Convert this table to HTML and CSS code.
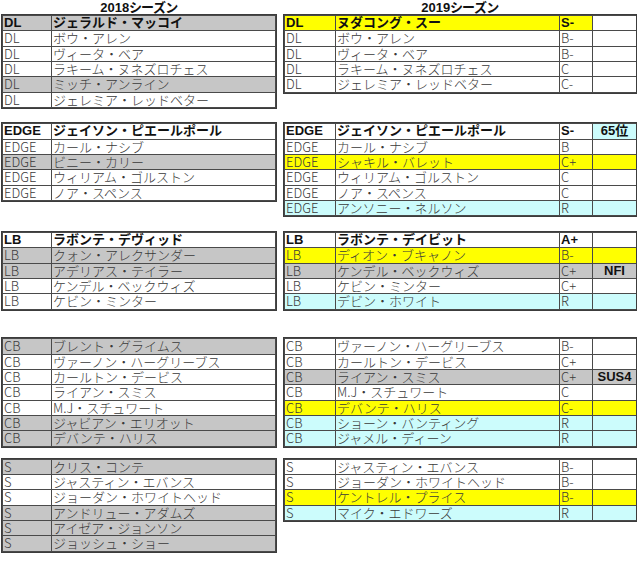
FILE: index.html
```html
<!DOCTYPE html>
<html lang="ja">
<head>
<meta charset="utf-8">
<link rel="stylesheet" href="styles.css">
</head>
<body>
<div class="sheet">
  <div class="title">2018シーズン</div>
  <div class="title">2019シーズン</div>

  <div class="tbl left">
    <div class="c h g">DL</div><div class="c h g">ジェラルド・マッコイ</div>
    <div class="c">DL</div><div class="c">ボウ・アレン</div>
    <div class="c">DL</div><div class="c">ヴィータ・ベア</div>
    <div class="c">DL</div><div class="c">ラキーム・ヌネズロチェス</div>
    <div class="c g">DL</div><div class="c g">ミッチ・アンライン</div>
    <div class="c">DL</div><div class="c">ジェレミア・レッドベター</div>
  </div>
  <div class="tbl right">
    <div class="c h y">DL</div><div class="c h y">ヌダコング・スー</div><div class="c h y">S-</div><div class="c"></div>
    <div class="c">DL</div><div class="c">ボウ・アレン</div><div class="c">B-</div><div class="c"></div>
    <div class="c">DL</div><div class="c">ヴィータ・ベア</div><div class="c">B-</div><div class="c"></div>
    <div class="c">DL</div><div class="c">ラキーム・ヌネズロチェス</div><div class="c">C</div><div class="c"></div>
    <div class="c">DL</div><div class="c">ジェレミア・レッドベター</div><div class="c">C-</div><div class="c"></div>
  </div>

  <div class="tbl left">
    <div class="c h">EDGE</div><div class="c h">ジェイソン・ピエールポール</div>
    <div class="c">EDGE</div><div class="c">カール・ナシブ</div>
    <div class="c g">EDGE</div><div class="c g">ビニー・カリー</div>
    <div class="c">EDGE</div><div class="c">ウィリアム・ゴルストン</div>
    <div class="c">EDGE</div><div class="c">ノア・スペンス</div>
  </div>
  <div class="tbl right">
    <div class="c h">EDGE</div><div class="c h">ジェイソン・ピエールポール</div><div class="c h">S-</div><div class="c h b ctr">65位</div>
    <div class="c">EDGE</div><div class="c">カール・ナシブ</div><div class="c">B</div><div class="c"></div>
    <div class="c y">EDGE</div><div class="c y">シャキル・バレット</div><div class="c y">C+</div><div class="c y"></div>
    <div class="c">EDGE</div><div class="c">ウィリアム・ゴルストン</div><div class="c">C</div><div class="c"></div>
    <div class="c">EDGE</div><div class="c">ノア・スペンス</div><div class="c">C</div><div class="c"></div>
    <div class="c b">EDGE</div><div class="c b">アンソニー・ネルソン</div><div class="c b">R</div><div class="c b"></div>
  </div>

  <div class="tbl left">
    <div class="c h">LB</div><div class="c h">ラボンテ・デヴィッド</div>
    <div class="c g">LB</div><div class="c g">クォン・アレクサンダー</div>
    <div class="c g">LB</div><div class="c g">アデリアス・テイラー</div>
    <div class="c">LB</div><div class="c">ケンデル・ベックウィズ</div>
    <div class="c">LB</div><div class="c">ケビン・ミンター</div>
  </div>
  <div class="tbl right">
    <div class="c h">LB</div><div class="c h">ラボンテ・デイビット</div><div class="c h">A+</div><div class="c"></div>
    <div class="c y">LB</div><div class="c y">ディオン・ブキャノン</div><div class="c y">B-</div><div class="c y"></div>
    <div class="c g">LB</div><div class="c g">ケンデル・ベックウィズ</div><div class="c g">C+</div><div class="c g h ctr">NFI</div>
    <div class="c">LB</div><div class="c">ケビン・ミンター</div><div class="c">C+</div><div class="c"></div>
    <div class="c b">LB</div><div class="c b">デビン・ホワイト</div><div class="c b">R</div><div class="c b"></div>
  </div>

  <div class="tbl left gap2">
    <div class="c g">CB</div><div class="c g">ブレント・グライムス</div>
    <div class="c">CB</div><div class="c">ヴァーノン・ハーグリーブス</div>
    <div class="c">CB</div><div class="c">カールトン・デービス</div>
    <div class="c">CB</div><div class="c">ライアン・スミス</div>
    <div class="c">CB</div><div class="c">M.J・スチュワート</div>
    <div class="c g">CB</div><div class="c g">ジャビアン・エリオット</div>
    <div class="c g">CB</div><div class="c g">デバンテ・ハリス</div>
  </div>
  <div class="tbl right gap2">
    <div class="c">CB</div><div class="c">ヴァーノン・ハーグリーブス</div><div class="c">B-</div><div class="c"></div>
    <div class="c">CB</div><div class="c">カールトン・デービス</div><div class="c">C+</div><div class="c"></div>
    <div class="c g">CB</div><div class="c g">ライアン・スミス</div><div class="c g">C+</div><div class="c g h ctr">SUS4</div>
    <div class="c">CB</div><div class="c">M.J・スチュワート</div><div class="c">C</div><div class="c"></div>
    <div class="c y">CB</div><div class="c y">デバンテ・ハリス</div><div class="c y">C-</div><div class="c y"></div>
    <div class="c b">CB</div><div class="c b">ショーン・バンティング</div><div class="c b">R</div><div class="c b"></div>
    <div class="c b">CB</div><div class="c b">ジャメル・ディーン</div><div class="c b">R</div><div class="c b"></div>
  </div>

  <div class="tbl left gap3">
    <div class="c g">S</div><div class="c g">クリス・コンテ</div>
    <div class="c">S</div><div class="c">ジャスティン・エバンス</div>
    <div class="c">S</div><div class="c">ジョーダン・ホワイトヘッド</div>
    <div class="c g">S</div><div class="c g">アンドリュー・アダムズ</div>
    <div class="c g">S</div><div class="c g">アイゼア・ジョンソン</div>
    <div class="c g">S</div><div class="c g">ジョッシュ・ショー</div>
  </div>
  <div class="tbl right gap3">
    <div class="c">S</div><div class="c">ジャスティン・エバンス</div><div class="c">B-</div><div class="c"></div>
    <div class="c">S</div><div class="c">ジョーダン・ホワイトヘッド</div><div class="c">B-</div><div class="c"></div>
    <div class="c y">S</div><div class="c y">ケントレル・プライス</div><div class="c y">B-</div><div class="c y"></div>
    <div class="c b">S</div><div class="c b">マイク・エドワーズ</div><div class="c b">R</div><div class="c b"></div>
  </div>
</div>
</body>
</html>
```

FILE: styles.css
```css
html, body {
  margin: 0;
  padding: 0;
  background: #ffffff;
}
body {
  width: 640px;
  height: 561px;
  overflow: hidden;
  font-family: "Noto Sans CJK JP", "Noto Sans", sans-serif;
}
.sheet {
  display: grid;
  grid-template-columns: 276px 354px;
  column-gap: 6px;
  padding-left: 1px;
  align-items: start;
}
.title {
  height: 14px;
  line-height: 15px;
  text-align: center;
  font-family: "Liberation Sans", "Noto Sans CJK JP", sans-serif;
  font-weight: 700;
  font-size: 13px;
  color: #111;
  font-feature-settings: "palt";
}
.tbl {
  display: grid;
  grid-auto-rows: 14.35px;
  gap: 1px;
  padding: 1px;
  border: 1px solid #3c3c3c;
  background: #4a4a4a;
  margin-bottom: 13.35px;
}
.tbl.left {
  grid-template-columns: 48px 223px;
}
.tbl.right {
  grid-template-columns: 50px 223px 32px 43px;
}
.tbl.gap2 {
  margin-top: 13.35px;
}
.tbl.gap3 {
  margin-top: -3.45px;
}
.c {
  background: #ffffff;
  font-size: 13px;
  line-height: 14.35px;
  padding-left: 1px;
  color: #3a3a3a;
  font-weight: 300;
  white-space: nowrap;
}
.c.h {
  font-family: "Liberation Sans", "Noto Sans CJK JP", sans-serif;
  font-weight: 700;
  color: #111;
}
.c.ctr {
  text-align: center;
  padding-left: 0;
}
.c.g {
  background: #c6c6c6;
}
.c.y {
  background: #ffff00;
}
.c.b {
  background: #ccfcfc;
}
```
